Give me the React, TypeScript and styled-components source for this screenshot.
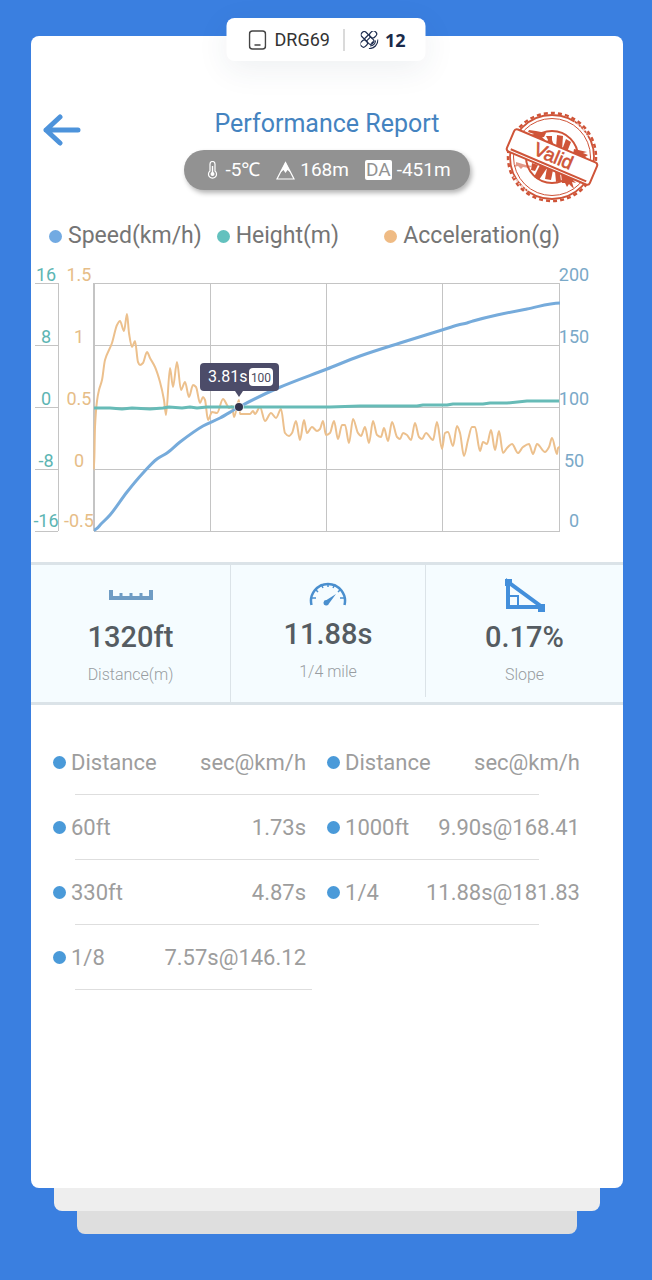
import React from 'react';
import styled, { createGlobalStyle } from 'styled-components';

const GlobalStyle = createGlobalStyle`
  *, *::before, *::after { box-sizing: border-box; }
  body {
    margin: 0;
    background: #3a7fe0;
    font-family: Roboto, 'Noto Sans', 'Noto Sans CJK SC', sans-serif;
  }
`;

const Page = styled.div`
  position: relative;
  display: flex;
  flex-direction: column;
  min-height: 100vh;
  padding: 36px 29px 46px 31px;
`;

const Card = styled.main`
  flex: 1;
  padding-top: 73px;
  border-radius: 8px;
  background: #fff;
`;

const StackLayer = styled.div<{ $inset: number; $color: string }>`
  height: 23px;
  margin: 0 ${(p) => p.$inset}px;
  border-radius: 0 0 8px 8px;
  background: ${(p) => p.$color};
`;

const StatusBadge = styled.div`
  position: absolute;
  top: 18px;
  left: 50%;
  display: flex;
  align-items: center;
  height: 43px;
  padding: 0 20px 0 22px;
  border-radius: 8px;
  background: #fff;
  box-shadow: 0 8px 32px rgba(40, 60, 90, 0.08);
  color: #333;
  font-size: 18px;
  white-space: nowrap;
  transform: translateX(-50%);
`;

const DeviceName = styled.span`
  margin-left: 8px;
`;

const BadgeDivider = styled.span`
  width: 1px;
  height: 22px;
  margin: 0 16px 0 14px;
  background: #b5b5b5;
`;

const SatelliteCount = styled.strong`
  margin-left: 6px;
  color: #1b2a4a;
  font-family: 'Open Sans', sans-serif;
  font-weight: 700;
`;

const Header = styled.header`
  display: grid;
  grid-template-columns: 1fr auto 1fr;
  height: 96px;
`;

const BackButton = styled.button`
  justify-self: start;
  align-self: start;
  margin: 5px 0 0 11px;
  padding: 0;
  border: 0;
  background: none;
  cursor: pointer;

  svg { display: block; }
`;

const Heading = styled.div`
  display: flex;
  flex-direction: column;
  align-items: center;
  gap: 11px;
`;

const Title = styled.h1`
  margin: 0;
  color: #4483c0;
  font-size: 25px;
  font-weight: 400;
  line-height: 30px;
`;

const Conditions = styled.div`
  display: flex;
  align-items: center;
  gap: 16px;
  height: 40px;
  padding: 0 19px 0 22px;
  border-radius: 20px;
  background: #929292;
  box-shadow: 2px 3px 5px rgba(0, 0, 0, 0.3);
  color: #fff;
  font-size: 19px;
  line-height: 20px;
  white-space: nowrap;
`;

const Condition = styled.span`
  display: flex;
  align-items: center;
  gap: 5px;
`;

const DensityTag = styled.span`
  padding: 0 1px;
  border-radius: 2px;
  background: #fff;
  color: #929292;
`;

const StampBox = styled.div`
  justify-self: end;
  margin-right: 23px;

  svg { display: block; }
`;

const Legend = styled.ul`
  display: grid;
  grid-template-columns: repeat(3, minmax(0, 1fr));
  margin: 15px 71px 4px 18px;
  padding: 0;
  list-style: none;
  color: #757575;
  font-size: 23px;
  line-height: 32px;
  white-space: nowrap;
`;

const LegendItem = styled.li`
  display: flex;
  align-items: center;
  gap: 6px;
`;

const Dot = styled.span<{ $color: string }>`
  flex: none;
  width: 13px;
  height: 13px;
  border-radius: 50%;
  background: ${(p) => p.$color};
`;

const ChartSvg = styled.svg`
  display: block;
  width: 100%;
  height: auto;
`;

const Stats = styled.section`
  display: grid;
  grid-template-columns: 200fr 195fr 197fr;
  height: 143px;
  border: solid #dbe3e8;
  border-width: 3px 0;
  background: #f5fcff;
`;

const Stat = styled.div<{ $divider?: boolean; $short?: boolean }>`
  display: flex;
  flex-direction: column;
  align-items: center;
  justify-content: center;
  margin-bottom: ${(p) => (p.$short ? 5 : 0)}px;
  padding-bottom: 6px;
  border-right: ${(p) => (p.$divider ? '1px solid #dbe3e8' : '0')};
`;

const StatIcon = styled.div`
  display: flex;
  align-items: center;
  height: 36px;
`;

const StatValue = styled.div`
  margin: 7px 0 11px;
  color: #555c62;
  font-size: 29px;
  font-weight: 500;
  line-height: 34px;
`;

const StatLabel = styled.div`
  color: #989da1;
  font-size: 16px;
  font-weight: 300;
  line-height: 20px;
`;

const Splits = styled.table`
  width: calc(100% - 65px);
  margin: 25px 43px 40px 22px;
  border-collapse: collapse;
  table-layout: fixed;
  color: #9d9d9d;
  font-size: 22px;
  white-space: nowrap;
`;

const SplitRow = styled.tr<{ $half?: boolean }>`
  position: relative;
  height: 65px;

  &::after {
    content: '';
    position: absolute;
    bottom: 0;
    left: 22px;
    width: ${(p) => (p.$half ? '45%' : '88%')};
    height: 1px;
    background: #dedede;
  }
`;

const NameCell = styled.td`
  padding: 0;
  font-weight: 400;
  text-align: left;
`;

const ValueCell = styled.td<{ $first?: boolean }>`
  padding: 0 ${(p) => (p.$first ? 21 : 0)}px 0 0;
  font-weight: 400;
  text-align: right;
`;

const NameContent = styled.span`
  display: flex;
  align-items: center;
  gap: 5px;
`;

type Point = [number, number];

/* Plot area is 466 x 248; the origin is its top left corner. */
const speed: Point[] = [
  [0, 247], [8, 240], [16, 232], [33, 209], [49, 190], [63, 176], [73, 170], [86, 159], [109, 143], [126, 135],
  [145, 124], [184, 105], [233, 86], [266, 73], [306, 60], [348, 47], [364, 42], [373, 40], [379, 38], [403, 32],
  [433, 26], [466, 20],
];

const heightLine: Point[] = [
  [0, 125], [16, 125], [28, 126], [38, 125], [56, 126], [69, 125], [75, 124], [88, 125], [96, 124], [103, 125],
  [113, 124], [145, 124], [236, 124], [266, 123], [323, 123], [329, 122], [353, 122], [359, 121], [389, 121],
  [396, 120], [413, 120], [433, 118], [465, 118],
];

const acceleration: Point[] = [
  [0, 187], [1, 144], [3, 118], [5, 107], [8, 97], [11, 77], [18, 60], [23, 42], [26, 38], [30, 48], [33, 31],
  [35, 50], [38, 64], [41, 58], [44, 79], [46, 82], [49, 80], [53, 69], [56, 75], [61, 84], [66, 99], [70, 117],
  [72, 132], [76, 85], [79, 104], [83, 79], [87, 107], [91, 99], [95, 114], [99, 102], [102, 104], [106, 120],
  [109, 114], [111, 117], [114, 137], [118, 129], [123, 130], [129, 116], [133, 122], [135, 125], [138, 123],
  [140, 134], [145, 117], [146, 131], [156, 131], [159, 128], [161, 131], [166, 124], [171, 138], [177, 130],
  [182, 135], [187, 126], [191, 150], [195, 153], [198, 150], [202, 138], [206, 157], [210, 137], [213, 150],
  [218, 144], [223, 148], [226, 146], [229, 138], [232, 152], [236, 150], [240, 138], [244, 156], [248, 142],
  [251, 142], [255, 160], [259, 136], [264, 150], [267, 153], [271, 144], [275, 160], [279, 138], [283, 152],
  [287, 154], [290, 145], [294, 158], [298, 139], [303, 154], [306, 156], [309, 150], [313, 152], [317, 157],
  [321, 140], [325, 154], [328, 156], [332, 150], [339, 157], [343, 139], [348, 166], [351, 150], [354, 149],
  [359, 163], [363, 143], [366, 150], [370, 173], [374, 157], [378, 144], [381, 144], [386, 168], [389, 159],
  [393, 161], [397, 147], [401, 167], [405, 148], [409, 170], [413, 165], [418, 161], [424, 170], [429, 164],
  [435, 161], [439, 171], [443, 161], [451, 169], [455, 164], [458, 155], [463, 171], [464, 165], [466, 164],
];

/* Monotone cubic path: flat at every peak and valley, smooth in between. */
function smoothPath(points: Point[]): string {
  const slopes = points.map((p, i) => {
    if (i === 0 || i === points.length - 1) return 0;
    const a = (p[1] - points[i - 1][1]) / (p[0] - points[i - 1][0]);
    const b = (points[i + 1][1] - p[1]) / (points[i + 1][0] - p[0]);
    return a * b <= 0 ? 0 : (2 * a * b) / (a + b);
  });
  return points.reduce((d, p, i) => {
    if (i === 0) return `M${p[0]} ${p[1]}`;
    const q = points[i - 1];
    const t = (p[0] - q[0]) / 3;
    return `${d}C${q[0] + t} ${q[1] + slopes[i - 1] * t} ${p[0] - t} ${p[1] - slopes[i] * t} ${p[0]} ${p[1]}`;
  }, '');
}

const linePath = (points: Point[]) => `M${points.map((p) => p.join(' ')).join('L')}`;

const gridY = [0, 62, 124, 186, 248];
const gridX = [116, 232, 348, 465];
const labelY = [25, 87, 149, 211, 271];
const axes = [
  { x: 15, color: '#5db5b3', labels: ['16', '8', '0', '-8', '-16'] },
  { x: 48, color: '#e6bd87', labels: ['1.5', '1', '0.5', '0', '-0.5'] },
  { x: 543, color: '#7aa9c8', labels: ['200', '150', '100', '50', '0'] },
];

function Chart() {
  return (
    <ChartSvg viewBox="0 0 592 306" role="img" aria-label="Speed, height and acceleration over time">
      <g transform="translate(63 27)" fill="none">
        <g stroke="#c4c4c4" shapeRendering="crispEdges">
          {gridY.map((y) => (
            <path key={y} d={`M0 ${y}H466M-59 ${y}H-36`} />
          ))}
          {gridX.map((x) => (
            <path key={x} d={`M${x} 0V248`} />
          ))}
          <path d="M-36 0V248" />
          <path d="M0 0V248" strokeWidth="2" />
        </g>
        <path d={smoothPath(acceleration)} stroke="#ecc08d" strokeWidth="2" strokeLinejoin="round" />
        <path d={linePath(heightLine)} stroke="#67bbb7" strokeWidth="3" strokeLinejoin="round" />
        <path d={smoothPath(speed)} stroke="#76abdb" strokeWidth="3" />
        <circle cx="145" cy="124" r="5" fill="#fff" opacity="0.6" />
        <circle cx="145" cy="124" r="4" fill="#33334d" />
      </g>
      {axes.map((axis) => (
        <g key={axis.x} fill={axis.color} fontSize="18" textAnchor="middle">
          {axis.labels.map((label, i) => (
            <text key={label} x={axis.x} y={labelY[i]}>{label}</text>
          ))}
        </g>
      ))}
      <rect x="169" y="107" width="79" height="28" rx="4" fill="#4c4c69" />
      <path d="M204 135h8l-4 6z" fill="#4c4c69" />
      <text x="177" y="126" fontSize="16" fill="#fff">3.81s</text>
      <rect x="218" y="112" width="24" height="18" rx="4" fill="#fff" />
      <text x="230" y="126" fontSize="12" fill="#4c4c60" textAnchor="middle">100</text>
    </ChartSvg>
  );
}

function Stamp() {
  return (
    <svg width="96" height="96" viewBox="-48 -48 96 96" role="img" aria-label="Valid stamp" fill="none" stroke="#cf5438">
      <circle r="44" strokeWidth="2.500" strokeDasharray="4 3.100" />
      <circle r="42" strokeWidth="1.800" />
      <circle r="38.500" strokeWidth="1" />
      <circle r="26" strokeWidth="2" />
      <g fill="#cf5438" stroke="none">
        <path d="M-23 -27l7 1 10 2-2 4-9 1-4-3 3-1-6-2z" />
        <path d="M-19 -18l8-3 4 4-6 3z" />
        <path d="M-6 -21l6 0 0 4 2 6-8-3 2-3z" />
        <path d="M5 -22l6 1-1 14-6-2z" />
        <path d="M14 -18l5 3-4 10-5-2z" />
        <path d="M22 -8l13 3-4 1 5 2-3 2 4 3-16-6z" />
        <path d="M-20 6l6 2-3 6-4-1z" />
        <path d="M-12 8l7 3-8 12-5-3z" />
        <path d="M-5 11l6 2-2 10-6-1z" />
        <path d="M3 14l5 2 1 8-5 1z" />
        <path d="M9 16l16 7-4 0 3 3-4-1 2 7-5-5-2 3-2-4-3 0z" />
        <path d="M-36 5l10 3 6 1-3 2-6-1-2 2-3-3-4 1 2-3z" opacity="0.6" />
      </g>
      <path d="M22 -35l9 7 5 7M-38 20l6 8 8 6" stroke="#fff" strokeWidth="2" strokeDasharray="1 2 3 2" opacity="0.7" />
      <g transform="rotate(23)">
        <rect x="-45" y="-12" width="90" height="24" rx="3" fill="#fff" strokeWidth="2" />
        <path d="M-41 9H41" strokeWidth="2" />
        <text
          x="1"
          y="5"
          fill="#cf5438"
          strokeWidth="0.600"
          fontFamily="'Liberation Sans', Arial, sans-serif"
          fontSize="19"
          textAnchor="middle"
        >
          Valid
        </text>
      </g>
    </svg>
  );
}

const TabletIcon = () => (
  <svg width="18" height="20" viewBox="0 0 18 20" fill="none" stroke="#444" aria-hidden="true">
    <rect x="1" y="1" width="16" height="18" rx="3" strokeWidth="1.5" />
    <path d="M6 15H12" strokeWidth="1.5" />
  </svg>
);

const SatelliteIcon = () => (
  <svg width="18" height="18" viewBox="0 0 18 18" fill="none" stroke="#1f2e50" strokeWidth="1.2" aria-hidden="true">
    <g transform="rotate(45 8 8)">
      <rect x="-1" y="5" width="15" height="6" rx="2.500" />
      <rect x="5" y="-2" width="6" height="7" rx="2.500" />
      <rect x="5" y="11" width="6" height="7" rx="2.500" />
      <path d="M5 5V11M8 5V11" />
    </g>
    <path d="M17.400 8.500a8.500 8.500 0 0 1-9 9M15 9.500a6 6 0 0 1-5.500 5.500M12.500 10.500a3 3 0 0 1-2 2" />
  </svg>
);

const ThermometerIcon = () => (
  <svg width="14" height="18" viewBox="0 0 14 18" fill="none" stroke="#fff" aria-hidden="true">
    <path d="M4 10V3a2.500 2.500 0 0 1 5 0v7a4 4 0 1 1-5 0z" strokeWidth="1.2" />
    <path d="M6.500 5v8" strokeWidth="1.4" />
    <circle cx="6.500" cy="13" r="2" fill="#fff" stroke="none" />
  </svg>
);

const MountainIcon = () => (
  <svg width="19" height="19" viewBox="0 0 19 19" aria-hidden="true">
    <path d="M9.500 1.500L18 18H1z" fill="none" stroke="#fff" strokeWidth="1.200" />
    <path d="M9.500 1L14.500 11.500 11.500 9 9.500 12 7.500 9 4.500 11.500z" fill="#fff" />
  </svg>
);

const RulerIcon = () => (
  <svg width="44" height="12" viewBox="0 0 44 12" fill="none" stroke="#6f9cc4" aria-hidden="true">
    <path d="M2 1V9H42V1" strokeWidth="4" />
    <path d="M12 4V8M22 4V8M32 4V8" strokeWidth="3" />
  </svg>
);

const GaugeIcon = () => (
  <svg width="38" height="28" viewBox="0 0 38 28" fill="none" stroke="#4a8fce" aria-hidden="true">
    <path d="M2.500 27a17 17 0 1 1 33 0" strokeWidth="2.500" />
    <path d="M19 5v4M12 6l2 4M26 6l-2 4M6 11l3 3M32 11l-3 3M3 20h4M35 20h-4" strokeWidth="1.500" />
    <path d="M27 16L20 25.500A2.800 2.800 0 1 1 17.500 22z" fill="#4a8fce" stroke="none" />
  </svg>
);

const SlopeIcon = () => (
  <svg width="40" height="34" viewBox="0 0 40 34" fill="none" stroke="#438fdb" aria-hidden="true">
    <path d="M3 4V29H37z" strokeWidth="4" />
    <path d="M4 18H13V28" strokeWidth="2" />
    <path d="M0 1h7v7H0zM33 26h7v8h-7z" fill="#438fdb" stroke="none" />
  </svg>
);

const legend = [
  { label: 'Speed(km/h)', color: '#72aae2' },
  { label: 'Height(m)', color: '#63c1be' },
  { label: 'Acceleration(g)', color: '#efbb84' },
];

const stats = [
  { icon: <RulerIcon />, value: '1320ft', label: 'Distance(m)' },
  { icon: <GaugeIcon />, value: '11.88s', label: '1/4 mile' },
  { icon: <SlopeIcon />, value: '0.17%', label: 'Slope' },
];

const splits = [
  ['60ft', '1.73s', '1000ft', '9.90s@168.41'],
  ['330ft', '4.87s', '1/4', '11.88s@181.83'],
  ['1/8', '7.57s@146.12'],
];

const Name = ({ children }: { children: React.ReactNode }) => (
  <NameContent>
    <Dot $color="#4a9ad9" />
    {children}
  </NameContent>
);

export default function App() {
  return (
    <>
      <GlobalStyle />
      <Page>
        <Card>
          <Header>
            <BackButton type="button" aria-label="Back">
              <svg width="40" height="32" viewBox="0 0 40 32" fill="none" stroke="#4d93db" strokeWidth="5" strokeLinecap="round" strokeLinejoin="round">
                <path d="M36 16H4M18 3L4 16l14 13" />
              </svg>
            </BackButton>
            <Heading>
              <Title>Performance Report</Title>
              <Conditions>
                <Condition><ThermometerIcon />-5℃</Condition>
                <Condition><MountainIcon />168m</Condition>
                <Condition><DensityTag>DA</DensityTag>-451m</Condition>
              </Conditions>
            </Heading>
            <StampBox><Stamp /></StampBox>
          </Header>
          <Legend>
            {legend.map((item) => (
              <LegendItem key={item.label}>
                <Dot $color={item.color} />
                {item.label}
              </LegendItem>
            ))}
          </Legend>
          <Chart />
          <Stats>
            {stats.map((stat, i) => (
              <Stat key={stat.label} $divider={i < 2} $short={i === 1}>
                <StatIcon>{stat.icon}</StatIcon>
                <StatValue>{stat.value}</StatValue>
                <StatLabel>{stat.label}</StatLabel>
              </Stat>
            ))}
          </Stats>
          <Splits>
            <colgroup>
              <col style={{ width: '20%' }} />
              <col style={{ width: '32%' }} />
              <col style={{ width: '18%' }} />
              <col style={{ width: '30%' }} />
            </colgroup>
            <thead>
              <SplitRow>
                <NameCell as="th" scope="col"><Name>Distance</Name></NameCell>
                <ValueCell as="th" scope="col" $first>sec@km/h</ValueCell>
                <NameCell as="th" scope="col"><Name>Distance</Name></NameCell>
                <ValueCell as="th" scope="col">sec@km/h</ValueCell>
              </SplitRow>
            </thead>
            <tbody>
              {splits.map(([name, value, nextName, nextValue]) => (
                <SplitRow key={name} $half={!nextName}>
                  <NameCell><Name>{name}</Name></NameCell>
                  <ValueCell $first>{value}</ValueCell>
                  {nextName && <NameCell><Name>{nextName}</Name></NameCell>}
                  {nextName && <ValueCell>{nextValue}</ValueCell>}
                </SplitRow>
              ))}
            </tbody>
          </Splits>
        </Card>
        <StackLayer $inset={23} $color="#eeeeee" />
        <StackLayer $inset={46} $color="#dedede" />
        <StatusBadge>
          <TabletIcon />
          <DeviceName>DRG69</DeviceName>
          <BadgeDivider />
          <SatelliteIcon />
          <SatelliteCount>12</SatelliteCount>
        </StatusBadge>
      </Page>
    </>
  );
}
